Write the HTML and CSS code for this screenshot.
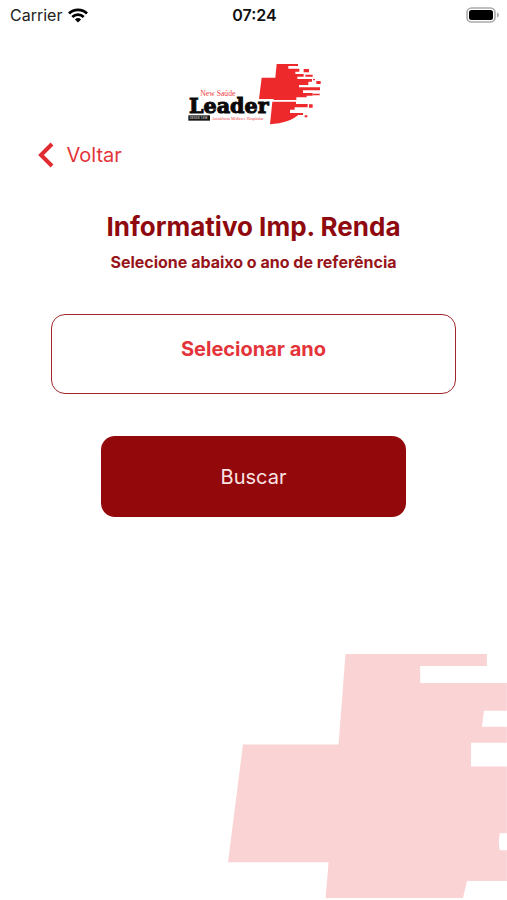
FILE: index.html
```html
<!DOCTYPE html>
<html lang="pt-BR">
<head>
<meta charset="utf-8">
<meta name="viewport" content="width=device-width, initial-scale=1">
<title>Informativo Imp. Renda</title>
<link rel="stylesheet" href="styles.css">
</head>
<body>
<div class="status">
  <div class="status-side">
    <span>Carrier</span>
    <svg class="wifi" viewBox="0 0 20 15" aria-hidden="true">
      <g fill="none" stroke="#000" stroke-width="2.8">
        <path d="M1 5.6a12.8 12.8 0 0 1 18 0"/>
        <path d="M4.3 9a8.2 8.2 0 0 1 11.4 0"/>
      </g>
      <path d="M10 14.6 6.9 11.5a4.5 4.5 0 0 1 6.2 0z"/>
    </svg>
  </div>
  <time class="clock">07:24</time>
  <div class="status-side status-end">
    <svg class="battery" viewBox="0 0 33 16" aria-hidden="true">
      <rect x="1" y="1" width="28" height="14" rx="4.5" fill="#fff" stroke="#aaa" stroke-width="1.6"/>
      <rect x="3" y="3" width="24" height="10" rx="2.5"/>
      <path d="M31 5.500q2 .8 2 2.500t-2 2.500z" fill="#aaa"/>
    </svg>
  </div>
</div>
<header class="brand">
  <svg class="logo" viewBox="24 24 405 189" role="img" aria-label="New Saúde Leader">
    <g fill="#ee292c">
      <path d="M290 27H354V33H325V41H358V50H346V57H371V65H352V72H396V80H385V90H357V97H420V106H369V114H398V122H380V127H349V135H280L282 132H237L245 68H286z"/>
      <path d="M371 42h16v10h-16zM376 59h22v6h-22zM409 78h13v9h-13zM399 72h6v4h-6zM399 116h20v5h-20z"/>
      <path d="M277 140H348V147H383V157H344V164H330V174H369V180H355C337 195 309 205 270 208z"/>
      <path d="M387 148h11v10h-11zM374 181h8v6h-8z"/>
    </g>
    <text class="logo-top" x="61" y="124">New Saúde</text>
    <text class="logo-name" x="27" y="173">Leader</text>
    <rect x="25" y="181" width="65" height="16" fill="#171414"/>
    <text class="logo-tag" x="29" y="193">DESDE 1998</text>
    <text class="logo-small" x="95" y="194">Assistência Médica e Hospitalar</text>
  </svg>
</header>
<main class="page">
  <a class="back" href="#">
    <svg class="chevron" viewBox="0 0 16 26" aria-hidden="true"><path d="M14 2 3 13l11 11"/></svg>
    <span>Voltar</span>
  </a>
  <h1 class="title">Informativo Imp. Renda</h1>
  <form class="form">
    <label class="subtitle" for="year">Selecione abaixo o ano de referência</label>
    <select class="year" id="year">
      <option>Selecionar ano</option>
    </select>
    <button class="submit" type="button">Buscar</button>
  </form>
</main>
<svg class="watermark" viewBox="0 0 280 247" aria-hidden="true">
  <path d="M118 0H260V12H193V29H280V57H257L255 73H280V89H244V113H280V180H273Q271 188 273 197H280V228H240L236 245H98L101 209H0L15 91H111z"/>
</svg>
</body>
</html>
```
FILE: styles.css
```css
* {
  box-sizing: border-box;
}

body {
  margin: 0;
  min-height: 100vh;
  display: flex;
  flex-direction: column;
  background: #fff;
  color: #222;
  font-family: Inter, "Liberation Sans", sans-serif;
}

.status {
  display: flex;
  align-items: center;
  height: 30px;
  padding: 0 8px 0 10px;
  font-size: 16px;
}

.status-side {
  flex: 1;
  display: flex;
  align-items: center;
  gap: 6px;
}

.status-end {
  justify-content: flex-end;
}

.clock {
  color: #111;
  font-weight: 600;
}

.wifi {
  width: 20px;
  height: 15px;
}

.battery {
  width: 33px;
  height: 16px;
}

.brand {
  display: flex;
  justify-content: center;
  padding: 33px 0 0 4px;
}

.logo {
  width: 135px;
  height: 63px;
}

.logo-top,
.logo-small {
  fill: #ee3a40;
  font-family: "Liberation Serif", serif;
}

.logo-top {
  font-size: 23px;
}

.logo-small {
  font-size: 12px;
}

.logo-name {
  fill: #0b0909;
  stroke: #0b0909;
  stroke-width: 3px;
  font-family: "DejaVu Serif", serif;
  font-size: 62px;
  font-weight: 700;
}

.logo-tag {
  fill: #aaa;
  font-family: "Liberation Sans", sans-serif;
  font-size: 9px;
  font-weight: 700;
}

.page {
  display: flex;
  flex-direction: column;
  padding: 14px 7% 0;
}

.back {
  display: flex;
  align-items: center;
  align-self: flex-start;
  gap: 12px;
  margin-left: 3px;
  color: #e3343a;
  font-size: 20px;
  line-height: 30px;
  text-decoration: none;
}

.chevron {
  width: 16px;
  height: 26px;
  fill: none;
  stroke: #e02b30;
  stroke-width: 4px;
}

.title {
  margin: 40px 0 0;
  color: #8f0a0e;
  font-size: 26px;
  font-weight: 700;
  line-height: 34px;
  text-align: center;
}

.form {
  display: flex;
  flex-direction: column;
  align-items: center;
}

.subtitle {
  margin-top: 8px;
  color: #97151a;
  font-size: 16px;
  font-weight: 700;
  line-height: 20px;
  text-align: center;
}

.year {
  appearance: none;
  width: 93%;
  height: 80px;
  margin-top: 42px;
  padding: 0 16px 10px;
  border: 1px solid #a0262b;
  border-radius: 14px;
  background: #fff;
  color: #e3343a;
  font-family: inherit;
  font-size: 20px;
  font-weight: 700;
  text-align: center;
  text-align-last: center;
}

.submit {
  width: 70%;
  height: 81px;
  margin-top: 42px;
  border: 0;
  border-radius: 14px;
  background: #92080b;
  color: #fbe3e3;
  font-family: inherit;
  font-size: 20px;
}

.watermark {
  width: 55%;
  margin-top: auto;
  align-self: flex-end;
  fill: #fad4d5;
}
```
